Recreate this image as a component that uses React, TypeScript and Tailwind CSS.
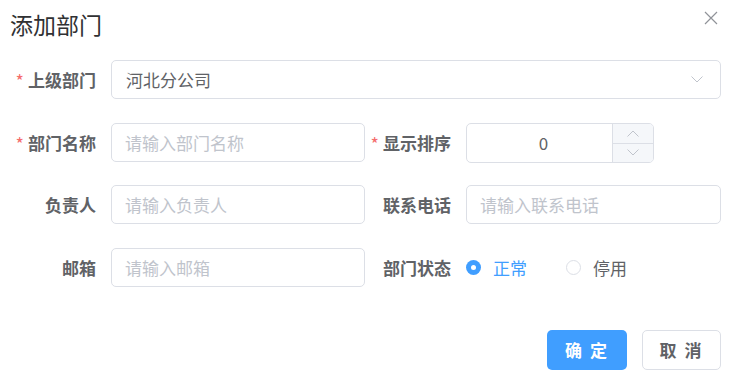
import React from "react";

const font = { fontFamily: '"Noto Sans CJK SC", "Noto Sans", sans-serif' };

function Label({ text, required, width }: { text: string; required?: boolean; width: string }) {
  return (
    <div className={`${width} shrink-0 flex items-center justify-end pr-[15px] text-[17px] font-bold text-[#606266]`}>
      {required && <span className="text-[#f56c6c] mr-[4px] text-[18px] font-normal leading-none">*</span>}
      <span>{text}</span>
    </div>
  );
}

function Input({ placeholder, className }: { placeholder: string; className?: string }) {
  return (
    <div
      className={`h-[39px] border border-[#dcdfe6] rounded-[5px] bg-white flex items-center pl-[13px] text-[17px] text-[#c0c4cc] ${className ?? ""}`}
    >
      {placeholder}
    </div>
  );
}

function Chevron({ up, className }: { up?: boolean; className?: string }) {
  return (
    <svg width="12" height="7" viewBox="0 0 12 7" className={className} fill="none">
      <path
        d={up ? "M0.5 6.5 L6 1 L11.5 6.5" : "M0.5 0.5 L6 6 L11.5 0.5"}
        stroke="#c0c4cc"
        strokeWidth="1"
      />
    </svg>
  );
}

export default function App() {
  return (
    <div className="w-[732px] h-[379px] bg-white relative overflow-hidden" style={font}>
      <div className="pl-[10px] pt-[9px] text-[23px] leading-[30px] text-[#303133]">添加部门</div>
      <button className="absolute left-[704px] top-[11px] w-[14px] h-[14px]">
        <svg width="14" height="14" viewBox="0 0 14 14">
          <path d="M1 1 L13 13 M13 1 L1 13" stroke="#909399" strokeWidth="1.2" />
        </svg>
      </button>

      <div className="mt-[21px] pr-[11px] flex flex-col">
        {/* row 1 */}
        <div className="flex h-[39px]">
          <Label text="上级部门" required width="w-[111px]" />
          <div className="flex-1 h-[39px] border border-[#dcdfe6] rounded-[5px] flex items-center pl-[14px] pr-[17px] text-[17px] text-[#606266]">
            <span className="flex-1">河北分公司</span>
            <Chevron />
          </div>
        </div>

        {/* row 2 */}
        <div className="flex h-[39px] mt-[24px]">
          <div className="w-[365px] flex">
            <Label text="部门名称" required width="w-[111px]" />
            <Input placeholder="请输入部门名称" className="flex-1" />
          </div>
          <div className="flex-1 flex">
            <Label text="显示排序" required width="w-[101px]" />
            <div className="w-[188px] h-[40px] border border-[#dcdfe6] rounded-[5px] flex overflow-hidden">
              <div className="flex-1 flex items-center justify-center pl-[8px] text-[17px] text-[#606266]">0</div>
              <div className="w-[41px] flex flex-col border-l border-[#dcdfe6] bg-[#f5f7fa]">
                <div className="flex-1 flex items-center justify-center border-b border-[#dcdfe6]">
                  <Chevron up />
                </div>
                <div className="flex-1 flex items-center justify-center">
                  <Chevron />
                </div>
              </div>
            </div>
          </div>
        </div>

        {/* row 3 */}
        <div className="flex h-[39px] mt-[23px]">
          <div className="w-[365px] flex">
            <Label text="负责人" width="w-[111px]" />
            <Input placeholder="请输入负责人" className="flex-1" />
          </div>
          <div className="flex-1 flex">
            <Label text="联系电话" width="w-[101px]" />
            <Input placeholder="请输入联系电话" className="flex-1" />
          </div>
        </div>

        {/* row 4 */}
        <div className="flex h-[39px] mt-[24px]">
          <div className="w-[365px] flex">
            <Label text="邮箱" width="w-[111px]" />
            <Input placeholder="请输入邮箱" className="flex-1" />
          </div>
          <div className="flex-1 flex">
            <Label text="部门状态" width="w-[101px]" />
            <div className="flex items-center text-[17px]">
              <span className="w-[15px] h-[15px] rounded-full bg-[#409eff] flex items-center justify-center">
                <span className="w-[5px] h-[5px] rounded-full bg-white" />
              </span>
              <span className="ml-[12px] text-[#409eff]">正常</span>
              <span className="ml-[39px] w-[15px] h-[15px] rounded-full border border-[#dcdfe6] bg-white" />
              <span className="ml-[12px] text-[#606266]">停用</span>
            </div>
          </div>
        </div>

        {/* buttons */}
        <div className="flex justify-end mt-[43px] gap-[15px]">
          <button className="w-[80px] h-[40px] rounded-[5px] bg-[#409eff] text-white text-[17px] font-bold tracking-[2px]">
            确 定
          </button>
          <button className="w-[79px] h-[40px] rounded-[5px] border border-[#dcdfe6] bg-white text-[#606266] text-[17px] font-bold tracking-[2px]">
            取 消
          </button>
        </div>
      </div>
    </div>
  );
}
